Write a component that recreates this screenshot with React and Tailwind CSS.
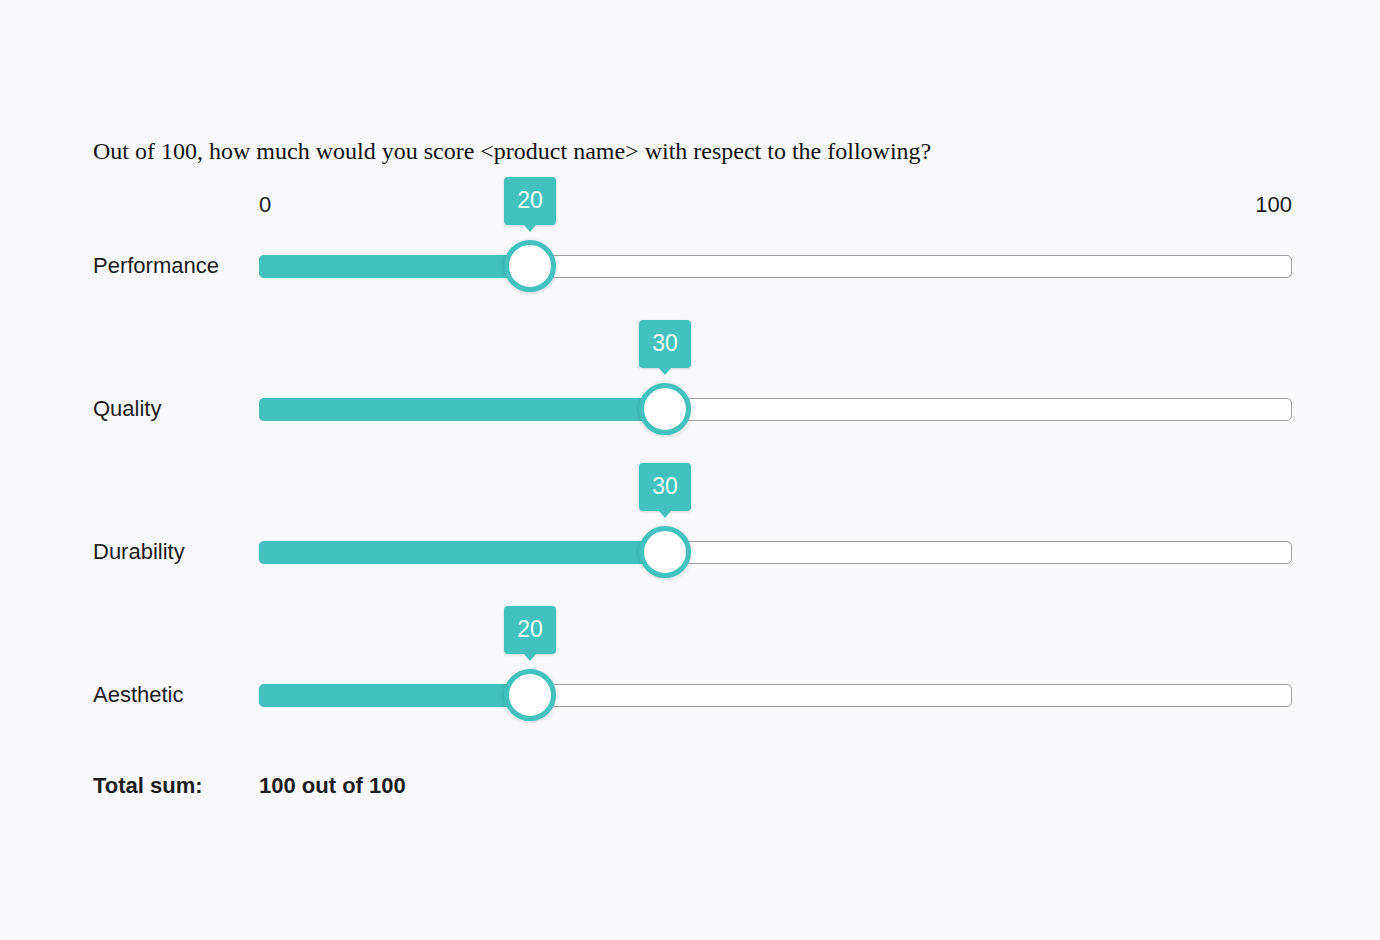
import React from "react"

const rows = [
  { label: "Performance", value: 20, pos: 271 },
  { label: "Quality", value: 30, pos: 406 },
  { label: "Durability", value: 30, pos: 406 },
  { label: "Aesthetic", value: 20, pos: 271 },
]

function SliderRow({ label, value, pos }) {
  return (
    <div className="flex items-center h-[52px]">
      <div className="w-[166px] text-[22px] leading-6 text-[#1c1c1c]">{label}</div>
      <div className="relative w-[1033px] h-[23px]">
        <div className="absolute inset-0 rounded-[5px] border-[1.5px] border-[#9f9f9f] bg-white" />
        <div
          className="absolute left-0 top-0 h-[23px] rounded-l-[5px] bg-[#43c1bf]"
          style={{ width: pos }}
        />
        <div
          className="absolute top-1/2 -translate-x-1/2 -translate-y-1/2 w-[52px] h-[52px] rounded-full border-[5px] border-[#43c1bf] bg-white shadow-[0_1px_4px_rgba(0,0,0,0.15)]"
          style={{ left: pos }}
        />
        <div
          className="absolute top-[-78px] -translate-x-1/2 w-[52px] h-[48px] rounded-[4px] bg-[#43c1bf] text-white text-[23px] flex items-center justify-center shadow-[0_1px_3px_rgba(0,0,0,0.15)]"
          style={{ left: pos }}
        >
          {value}
          <div className="absolute left-1/2 -translate-x-1/2 top-full w-0 h-0 border-l-[6px] border-r-[6px] border-t-[7px] border-l-transparent border-r-transparent border-t-[#43c1bf]" />
        </div>
      </div>
    </div>
  )
}

export default function App() {
  return (
    <div className="min-h-[940px] w-full bg-[#f9f9fb] pl-[93px] pt-[137px] font-['Liberation_Sans',Arial,sans-serif] text-[#1c1c1c]">
      <p className="font-['Liberation_Serif','Times_New_Roman',serif] text-[24px] leading-[28px] text-[#111]">
        Out of 100, how much would you score &lt;product name&gt; with respect to the following?
      </p>

      <div className="mt-[28px] flex h-6 items-center">
        <div className="w-[166px]" />
        <div className="flex w-[1033px] justify-between text-[22px] leading-6">
          <span>0</span>
          <span>100</span>
        </div>
      </div>

      <div className="mt-[23px] flex flex-col gap-[91px]">
        {rows.map((r) => (
          <SliderRow key={r.label} {...r} />
        ))}
      </div>

      <div className="mt-[53px] flex text-[22px] leading-6 font-bold">
        <div className="w-[166px]">Total sum:</div>
        <div>100 out of 100</div>
      </div>
    </div>
  )
}
